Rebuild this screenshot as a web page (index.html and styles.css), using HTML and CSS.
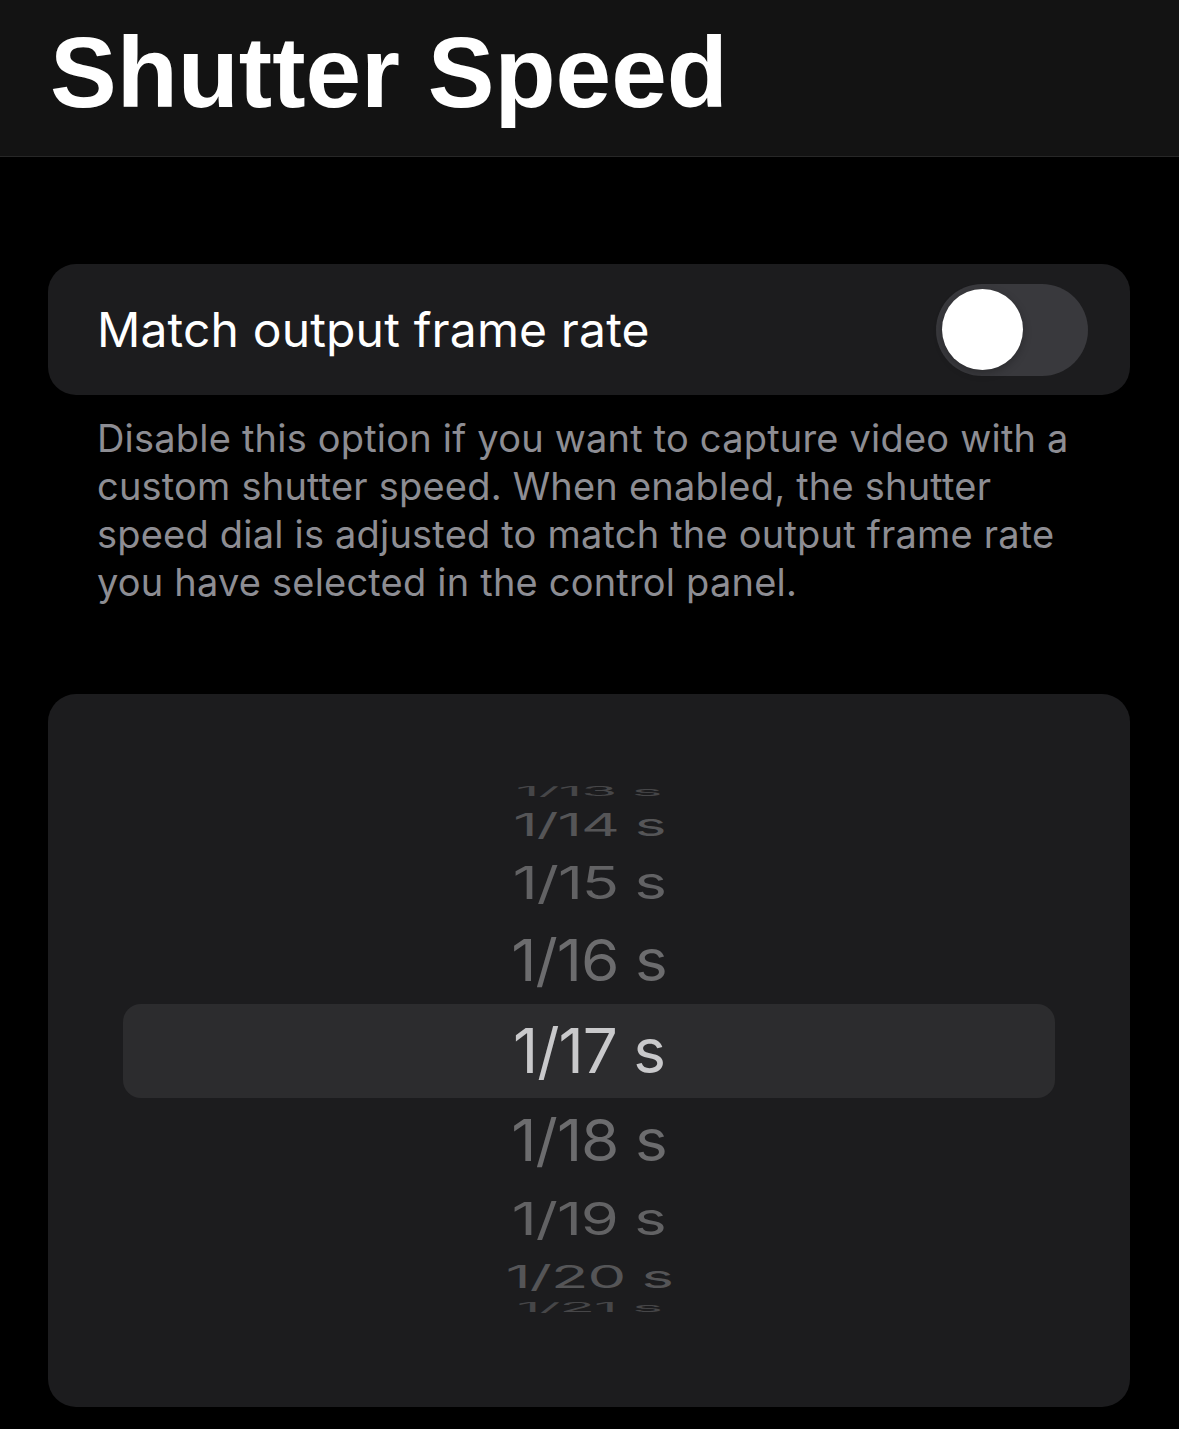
FILE: index.html
```html
<!DOCTYPE html>
<html lang="en">
<head>
<meta charset="utf-8">
<title>Shutter Speed</title>
<link rel="stylesheet" href="styles.css">
</head>
<body>
<header class="nav">
  <h1 class="nav-title">Shutter Speed</h1>
</header>
<main class="content">
  <section class="card toggle-card">
    <span class="toggle-label">Match output frame rate</span>
    <span class="switch"><span class="switch-knob"></span></span>
  </section>
  <p class="footnote">Disable this option if you want to capture video with a custom shutter speed. When enabled, the shutter speed dial is adjusted to match the output frame rate you have selected in the control panel.</p>
  <section class="card picker">
    <div class="picker-highlight"></div>
    <div class="wheel-item up-4">1/13 s</div>
    <div class="wheel-item up-3">1/14 s</div>
    <div class="wheel-item up-2">1/15 s</div>
    <div class="wheel-item up-1">1/16 s</div>
    <div class="wheel-item selected">1/17 s</div>
    <div class="wheel-item down-1">1/18 s</div>
    <div class="wheel-item down-2">1/19 s</div>
    <div class="wheel-item down-3">1/20 s</div>
    <div class="wheel-item down-4">1/21 s</div>
  </section>
</main>
</body>
</html>
```

FILE: styles.css
```css
html, body {
  margin: 0;
  padding: 0;
  background: #000;
}
body {
  width: 1179px;
  min-height: 1429px;
  font-family: Inter, "Noto Sans", "Liberation Sans", sans-serif;
  color: #fff;
  overflow: hidden;
}
.nav {
  height: 157px;
  box-sizing: border-box;
  padding: 22px 0 0 50px;
  background: #131313;
  border-bottom: 1px solid #272727;
}
.nav-title {
  margin: 0;
  font-family: "Liberation Sans", Arial, sans-serif;
  font-weight: 700;
  font-size: 100px;
  line-height: 100px;
  letter-spacing: 0;
  color: #fff;
}
.content {
  padding: 107px 49px 0 48px;
}
.card {
  background: #1c1c1e;
  border-radius: 28px;
}
.toggle-card {
  height: 131px;
  display: flex;
  align-items: center;
  justify-content: space-between;
  padding: 0 42px 0 49px;
}
.toggle-label {
  font-size: 48px;
  line-height: 56px;
  color: #fff;
  letter-spacing: 0.15px;
}
.switch {
  width: 152px;
  height: 92px;
  border-radius: 46px;
  background: #39393d;
  display: flex;
  align-items: center;
  padding: 0 6px;
  box-sizing: border-box;
}
.switch-knob {
  width: 81px;
  height: 81px;
  border-radius: 50%;
  background: #fff;
  box-shadow: 0 3px 8px rgba(0,0,0,0.25);
}
.footnote {
  margin: 19px 0 0 49px;
  width: 990px;
  font-size: 38px;
  line-height: 48px;
  color: #8d8d93;
  letter-spacing: 0.2px;
}
.picker {
  margin-top: 88px;
  height: 713px;
  display: grid;
  place-items: center;
}
.picker-highlight {
  grid-area: 1 / 1;
  width: 932px;
  height: 94px;
  border-radius: 18px;
  background: #2c2c2e;
}
.wheel-item {
  grid-area: 1 / 1;
  font-size: 62px;
  line-height: 62px;
  white-space: nowrap;
  color: #6c6c6e;
  letter-spacing: -1px;
}
.selected { color: #c9c9cb; }
.up-1 { transform: translateY(-90px) scaleY(0.93); }
.up-2 { transform: translateY(-168px) scale(0.99, 0.72); color: #626264; }
.up-3 { transform: translateY(-226px) scale(0.97, 0.5); color: #555557; }
.up-4 { transform: translateY(-259px) scale(0.94, 0.2); color: #464648; }
.down-1 { transform: translateY(90px) scaleY(0.93); }
.down-2 { transform: translateY(168px) scale(0.99, 0.72); color: #626264; }
.down-3 { transform: translateY(226px) scale(0.99, 0.5); color: #555557; }
.down-4 { transform: translateY(257px) scale(0.94, 0.2); color: #464648; }
```
